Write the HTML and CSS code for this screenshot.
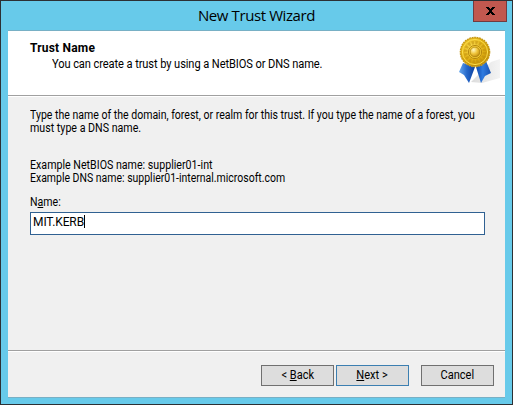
FILE: index.html
```html
<!DOCTYPE html>
<html lang="en">
<head>
<meta charset="utf-8">
<title>New Trust Wizard</title>
<link rel="stylesheet" href="styles.css">
</head>
<body>
<div class="window">
  <header class="titlebar">
    <h1 class="title">New Trust Wizard</h1>
    <button class="close" aria-label="Close">
      <svg width="9" height="8" viewBox="0 0 9 8" shape-rendering="crispEdges"><path d="M0 0h3v1h1v1h1V1h1V0h3v1H8v1H7v1H6v2h1v1h1v1h1v1H6V7H5V6H4v1H3v1H0V7h1V6h1V5h1V3H2V2H1V1H0z"/></svg>
    </button>
  </header>
  <main class="client">
    <section class="banner">
      <div class="heading">
        <h2 class="step">Trust Name</h2>
        <p class="sub">You can create a trust by using a NetBIOS or DNS name.</p>
      </div>
      <svg class="ribbon" width="44" height="52" viewBox="0 0 44 52">
        <defs>
          <radialGradient id="gold" cx=".42" cy=".38" r=".65"><stop offset="0" stop-color="#ffe45c"/><stop offset=".6" stop-color="#e0b014"/><stop offset="1" stop-color="#b98806"/></radialGradient>
          <radialGradient id="core" cx=".35" cy=".3" r=".8"><stop offset="0" stop-color="#fff6bd"/><stop offset=".5" stop-color="#efc43a"/><stop offset="1" stop-color="#b78309"/></radialGradient>
          <linearGradient id="blueL" x1="0" x2="1"><stop offset="0" stop-color="#68a8ee"/><stop offset=".5" stop-color="#2467ca"/><stop offset="1" stop-color="#0d3f9d"/></linearGradient>
          <linearGradient id="blueR" x1="0" x2="1"><stop offset="0" stop-color="#0e49ad"/><stop offset=".45" stop-color="#2f7be0"/><stop offset="1" stop-color="#1852b2"/></linearGradient>
          <linearGradient id="shade" x1="0" x2="1"><stop offset="0" stop-color="#dcdcdc"/><stop offset="1" stop-color="#f4f4f4"/></linearGradient>
        </defs>
        <path d="M13 46L33 26l9-3v19l-18 5z" fill="url(#shade)"/>
        <path d="M5 27L1 36l5 3 5 8 6-16z" fill="url(#blueL)"/>
        <path d="M18 31l5 16 4-7 6-3-5-12z" fill="url(#blueR)"/>
        <circle cx="17" cy="16" r="14.6" fill="url(#gold)" stroke="#c79a16" stroke-width="1.4" stroke-dasharray="1.8 .7"/>
        <circle cx="17" cy="16" r="12.6" fill="none" stroke="#fbdc4a" stroke-width="1"/>
        <circle cx="17" cy="16" r="9.4" fill="none" stroke="#bd8c0b" stroke-width="3.4" stroke-dasharray="2.2 1.5" opacity=".5"/>
        <circle cx="17" cy="16" r="6.6" fill="#f3cc35" stroke="#a87907" stroke-width=".8"/>
        <circle cx="17" cy="16" r="4.9" fill="url(#core)" stroke="#9f7408" stroke-width=".6"/>
      </svg>
    </section>
    <section class="body">
      <p class="line l1">Type the name of the domain, forest, or realm for this trust. If you type the name of a forest, you</p>
      <p class="line l2">must type a DNS name.</p>
      <p class="line l3">Example NetBIOS name: supplier01-int</p>
      <p class="line l4">Example DNS name: supplier01-internal.microsoft.com</p>
      <p class="line l5">N<u>a</u>me:</p>
      <div class="field"><span class="value">MIT.KERB</span><span class="caret"></span></div>
    </section>
    <footer class="actions">
      <button class="btn"><span class="label">&lt; <u>B</u>ack</span></button>
      <button class="btn primary"><span class="label"><u>N</u>ext &gt;</span></button>
      <button class="btn cancel"><span class="label">Cancel</span></button>
    </footer>
  </main>
</div>
</body>
</html>
```
FILE: styles.css
```css
* { box-sizing: border-box; }
body { margin: 0; font: 12px/13px Roboto, "Liberation Sans", sans-serif; color: #000; }
h1, h2, p { margin: 0; font-weight: normal; }
button { padding: 0; font: inherit; color: inherit; }
u { text-decoration-thickness: 1px; text-underline-offset: 1px; text-decoration-skip-ink: none; }
.window { width: 513px; height: 405px; border: 1px solid #2c3034; background: #67caea; padding: 0 7px 6px; overflow: hidden; }
.titlebar { position: relative; height: 29px; display: flex; justify-content: center; }
.title { font: 15px/29px "Open Sans", sans-serif; letter-spacing: -.4px; white-space: nowrap; }
.close { position: absolute; right: -2px; top: 0; width: 34px; height: 21px; border: 1px solid #713b40; border-top: 0; background: #c1584f; display: flex; align-items: center; justify-content: center; }
.client { height: 368px; border-top: 1px solid #78b0c5; border-bottom: 1px solid #78b0c5; background: #f0f0f0; display: flex; flex-direction: column; }
.banner { height: 66px; background: #fff; border-bottom: 1px solid #fff; box-shadow: inset 0 -1px #a0a0a0; padding: 5px 3px 0 22px; display: flex; justify-content: space-between; }
.heading { padding-top: 6px; white-space: nowrap; }
.step { font-size: 12px; font-weight: bold; line-height: 13px; letter-spacing: .2px; }
.sub { margin: 3px 0 0 22px; transform: scaleX(.925); transform-origin: left; letter-spacing: -.1px; }
.body { flex: 1; padding: 12px 20px 0 22px; }
.line { white-space: nowrap; width: max-content; height: 13px; transform-origin: left; }
.l1 { width: 455px; transform: scaleX(.878); }
.l2 { transform: scaleX(.888); }
.l3 { margin-top: 24px; transform: scaleX(.888); }
.l4 { transform: scaleX(.873); }
.l5 { margin-top: 11px; transform: scaleX(.88); }
.field { margin-top: 3px; height: 23px; border: 1px solid #306192; background: #fff; display: flex; padding: 2px; }
.value { line-height: 15px; letter-spacing: -.1px; }
.caret { width: 1px; height: 13px; background: #000; }
.actions { height: 47px; border-top: 1px solid #a0a0a0; box-shadow: inset 0 1px #fff; padding: 14px 11px 0 0; display: flex; justify-content: flex-end; gap: 2px; }
.btn { width: 73px; height: 21px; border: 1px solid #707070; background: #ddd; line-height: 19px; }
.label { display: inline-block; transform: scaleX(.92); }
.primary { border-color: #3c7fb1; }
.cancel { margin-left: 10px; }
```
